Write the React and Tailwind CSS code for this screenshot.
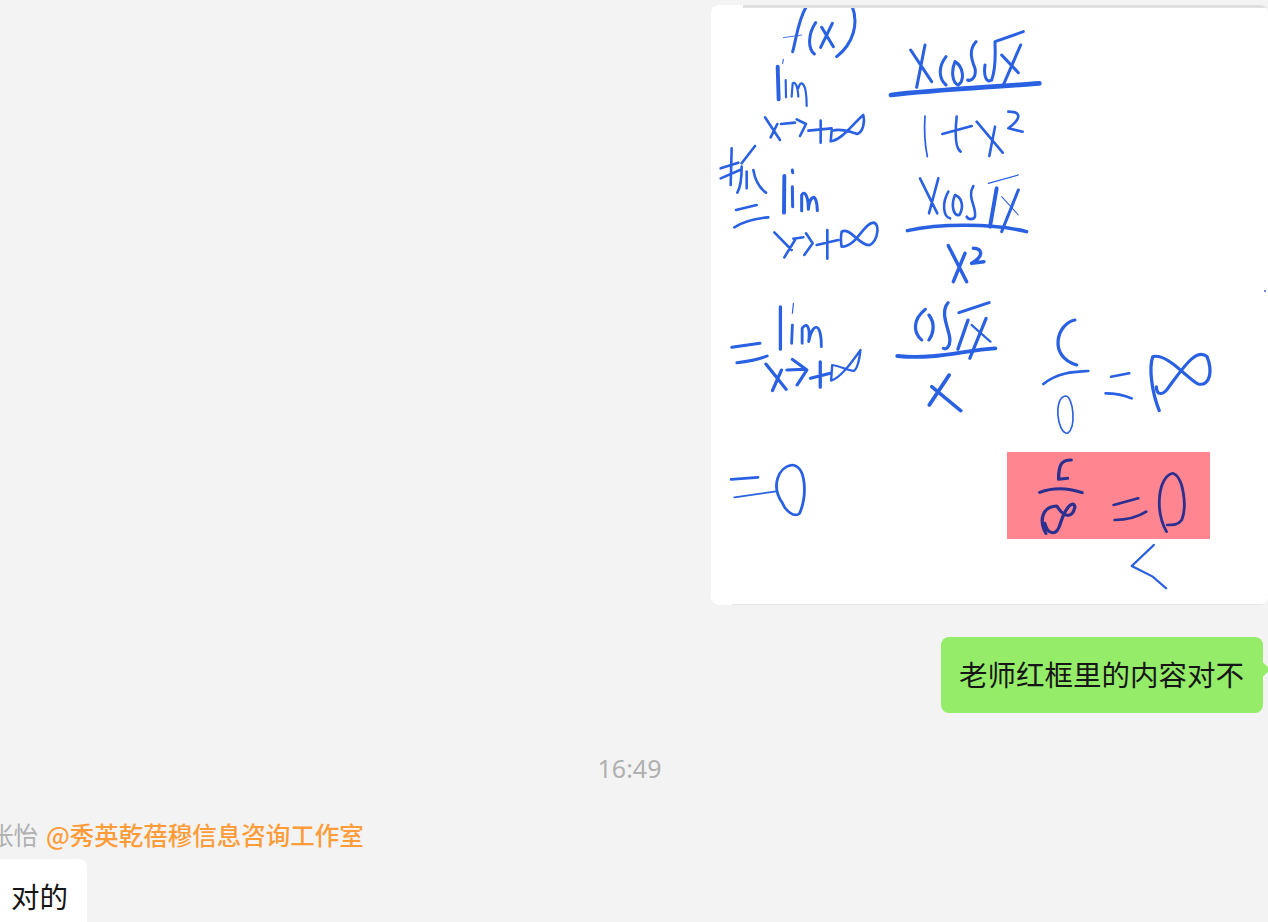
const BLUE = "#2a60e2";
const DARK = "#2b2f8f";

function Strokes({ d, w = 6, color = BLUE }) {
  return <path d={d} fill="none" stroke={color} strokeWidth={w * 1.3} strokeLinecap="round" strokeLinejoin="round" />;
}

function Handwriting() {
  return (
    <svg viewBox="711 5 557 600" className="block w-[557px] h-[600px]">
      <g transform="translate(700,0) scale(0.33333)">
        <Strokes d="M318 22C295 60 290 110 278 155M347 68C325 100 322 145 343 162M365 82L400 140M397 70L362 142M455 15C478 70 460 130 410 170" w={7} />
        <Strokes d="M250 113L305 105" w={2} />
        <Strokes d="M233 200L236 298" w={9} />
        <Strokes d="M257 240L258 292M275 290L278 250C285 245 293 255 295 290M295 265C300 240 320 240 320 318" w={5} />
        <Strokes d="M250 178L248 190" w={2.5} />
        <Strokes d="M195 352L240 420M232 372L212 412M243 372L285 368M290 358L318 372L300 408M325 392L395 385M362 362L362 428" w={6} />
        <Strokes d="M395 392L392 424C425 420 455 375 490 345C495 365 490 395 472 402C450 395 425 385 395 392" w={6} />
        <Strokes d="M632 150L695 245M675 135L650 262M738 170C715 200 715 235 738 255M765 185C752 215 758 250 775 255C795 240 790 200 765 185M828 125C805 150 815 180 825 205C830 230 815 245 803 240M855 195C850 230 860 250 875 240C890 200 885 150 885 125L970 95M962 135L910 255M905 165L955 218" w={7} />
        <Strokes d="M573 285C700 270 900 260 1018 250" w={11} />
        <Strokes d="M675 348C672 390 676 440 682 470" w={4} />
        <Strokes d="M727 402L815 378M770 350C765 400 765 445 782 455M830 365L908 458M885 380L868 468M925 335C965 335 965 355 925 385L968 395" w={6} />
        <Strokes d="M95 445L92 555M62 505L115 488M62 535L120 510M165 438L125 490M125 500C125 540 122 560 112 578M140 515L140 565M160 510C165 540 180 565 198 578" w={6} />
        <Strokes d="M108 630L170 615M103 682C130 665 170 655 205 652" w={6} />
        <Strokes d="M253 528L252 638" w={9} />
        <Strokes d="M277 510L278 518M277 560L278 620M305 632L305 585C315 570 325 590 325 628C328 590 350 570 352 632" w={7} />
        <Strokes d="M223 697L275 750M285 720L253 772M280 716L310 712M318 700L338 730L313 765M350 735L415 720M382 690L382 776M425 740C470 740 490 670 520 668C540 670 535 720 510 735C480 740 450 680 425 695C422 710 422 725 425 740" w={6} />
        <Strokes d="M660 535L712 640M715 535L687 640M745 575C725 610 730 650 750 655M765 585C752 615 760 650 778 645C790 625 790 595 765 585M820 558C800 590 830 620 825 650C820 660 805 660 800 650" w={6} />
        <Strokes d="M865 550L955 525" w={3} />
        <Strokes d="M890 565L870 680" w={9} />
        <Strokes d="M955 570L905 695" w={7} />
        <Strokes d="M905 590L955 645" w={2.5} />
        <Strokes d="M622 692C720 670 880 670 980 695" w={8} />
        <Strokes d="M745 737L800 845M795 760L760 845M820 745C850 745 850 770 815 790L852 785" w={8} />
      </g>
      <rect x="1007" y="452" width="203" height="87" fill="#ff8690" />
      <circle cx="1265" cy="291" r="1" fill={BLUE} />
      <g transform="translate(700,290) scale(0.3622,0.33333)">
        <Strokes d="M88 172L165 160M102 218C130 215 160 210 185 198" w={7} />
        <Strokes d="M222 50L222 178" w={7} />
        <Strokes d="M258 40L255 70" w={2.5} />
        <Strokes d="M255 105L253 160M282 160L282 115C295 95 305 110 300 155C310 100 335 90 335 170" w={6} />
        <Strokes d="M182 222L238 298M225 240L200 302M240 240L290 238M255 208L295 240L268 285M305 265L360 250M332 215L332 292" w={7} />
        <Strokes d="M365 225L362 272C390 262 420 215 443 180C440 210 435 235 425 243C405 240 385 228 365 225" w={5} />
        <Strokes d="M622 58C585 90 590 130 612 150M632 75C650 100 645 130 632 150M685 38C660 70 690 120 690 150C690 170 680 180 672 175M715 68L798 38M740 90L712 178M790 85L745 205" w={7} />
        <Strokes d="M750 105L802 155" w={5} />
        <Strokes d="M545 198C650 210 730 180 815 175" w={9} />
        <Strokes d="M688 255L633 345M640 290L720 362" w={8} />
        <Strokes d="M1035 90C985 100 960 200 1040 225" w={7} />
        <Strokes d="M948 282C990 245 1040 245 1072 243" w={6} />
        <Strokes d="M1010 318C975 320 985 430 1015 430C1040 410 1030 320 1010 318" w={3.5} />
        <Strokes d="M1135 260L1185 250M1120 310C1150 310 1170 315 1192 325" w={6} />
        <Strokes d="M1268 362C1245 300 1240 230 1250 200C1290 190 1340 260 1375 282C1410 290 1415 240 1400 200C1370 170 1330 240 1295 290C1280 315 1260 320 1260 290" w={7} />
        <Strokes d="M86 568L160 562M228 640C195 590 215 530 255 525C295 530 295 620 275 670C260 685 235 660 228 640" w={6} />
        <Strokes d="M95 622L210 604" w={4} />
        <Strokes d="M1025 510C1000 510 990 520 990 568L1015 565" w={7} color={DARK} />
        <Strokes d="M938 607C980 590 1020 595 1055 608M955 730C935 690 945 650 985 648C1010 690 1030 680 1035 650C1030 630 1010 650 995 700C985 740 960 735 952 700" w={7} color={DARK} />
        <Strokes d="M1142 645L1210 625M1145 690C1180 690 1210 680 1232 665M1288 725C1255 660 1265 560 1305 550C1335 560 1345 650 1330 690C1320 705 1305 705 1290 705" w={6} color={DARK} />
        <Strokes d="M1253 765L1192 828L1250 860L1287 895" w={5} />
      </g>
    </svg>
  );
}

export default function App() {
  return (
    <div className="relative flex flex-col h-[922px] overflow-hidden bg-[#f3f3f3] font-['Noto_Sans_CJK_SC','Noto_Sans',sans-serif]">
      <div className="shrink-0 self-end mt-[5px] w-[557px] h-[600px] rounded-lg bg-white overflow-hidden relative">
        <Handwriting />
        <div className="absolute top-0 left-[32px] right-0 h-[3px] bg-[#dfdfdf]" />
        <div className="absolute bottom-0 left-[21px] right-0 h-px bg-[#e6e6e6]" />
      </div>

      <div className="shrink-0 self-end relative mt-[32px] mr-[5px] w-[322px] h-[76px] rounded-lg bg-[#95ec69] flex items-center pl-[18px] pb-[2px]">
        <span className="text-[28.5px] text-[#161616] whitespace-nowrap leading-none">老师红框里的内容对不</span>
        <div className="absolute -right-[5px] top-[27px] w-[11px] h-[11px] rotate-45 rounded-[2px] bg-[#95ec69]" />
      </div>

      <div className="shrink-0 mt-[38px] pr-[9px] text-center text-[25px] leading-[34px] text-[#b0b0b0] font-['Noto_Sans',sans-serif]">16:49</div>

      <div className="shrink-0 mt-[33px] -ml-[11px] flex items-center h-[34px] whitespace-nowrap text-[24.5px] leading-none">
        <span className="text-[#b0b0b0]">张怡</span>
        <span className="ml-[8px] font-medium text-[#ff9c3a]">@秀英乾蓓穆信息咨询工作室</span>
      </div>

      <div className="shrink-0 mt-[7px] w-[87px] h-[80px] rounded-tr-lg bg-white pl-[11px] pt-[23px] text-[28.5px] leading-none text-[#161616]">
        对的
      </div>
    </div>
  );
}
